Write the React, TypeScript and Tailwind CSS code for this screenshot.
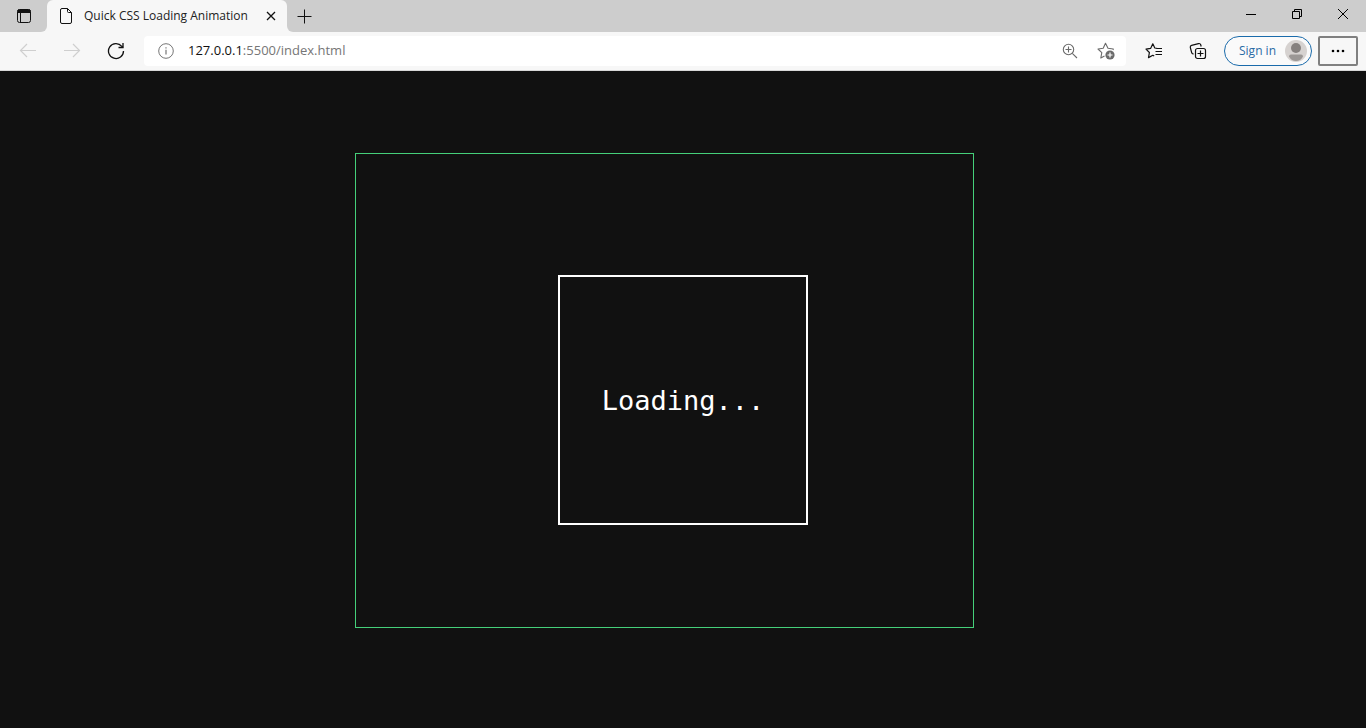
import { useState } from "react";

const pageUrl = { host: "127.0.0.1", rest: ":5500/index.html" };

function TitleBar() {
    return (
        <header className="flex h-8 items-stretch bg-[#f7f7f7]">
            <button aria-label="Tab actions" className="flex w-[47px] items-center justify-center rounded-br-md bg-[#cdcdcd]">
                <svg width="16" height="16" viewBox="0 0 16 16" fill="none" stroke="#111">
                    <rect x="1.5" y="1.5" width="13" height="13" rx="2" />
                    <path d="M2 2h12v2.5H2z" fill="#111" />
                    <path d="M4.5 5v9" />
                </svg>
            </button>

            <div className="bg-[#cdcdcd]">
                <div className="flex h-full w-60 items-center rounded-t-md bg-[#f7f7f7] pr-2 pl-3">
                    <svg width="14" height="16" viewBox="0 0 14 16" fill="none" stroke="#111">
                        <path d="M3 .5h5.5l4 4V14a1.5 1.5 0 0 1-1.5 1.5H3A1.5 1.5 0 0 1 1.5 14V2A1.5 1.5 0 0 1 3 .5z" />
                        <path d="M8.5 .5v3a1 1 0 0 0 1 1h3" />
                    </svg>
                    <span className="ml-[11px] flex-1 text-xs whitespace-nowrap text-[#222]">Quick CSS Loading Animation</span>
                    <button aria-label="Close tab" className="flex h-4 w-4 items-center justify-center">
                        <svg width="10" height="10" viewBox="0 0 10 10" stroke="#111" strokeWidth="1.3">
                            <path d="M1 1l8 8M9 1L1 9" />
                        </svg>
                    </button>
                </div>
            </div>

            <div className="flex flex-1 rounded-bl-md bg-[#cdcdcd]">
                <button aria-label="New tab" className="flex w-[35px] items-center justify-center">
                    <svg width="15" height="15" viewBox="0 0 15 15" stroke="#111">
                        <path d="M7.5 .5v14M.5 7.5h14" />
                    </svg>
                </button>

                <div className="ml-auto flex pb-1">
                    <button aria-label="Minimize" className="flex w-[46px] items-center justify-center">
                        <svg width="10" height="10" viewBox="0 0 10 10" stroke="#000">
                            <path d="M0 5.5h10" />
                        </svg>
                    </button>
                    <button aria-label="Restore" className="flex w-[46px] items-center justify-center">
                        <svg width="10" height="10" viewBox="0 0 10 10" fill="none" stroke="#000">
                            <path d="M.5 2.5h7v7h-7zM2.5 2.5v-2h7v7h-2" />
                        </svg>
                    </button>
                    <button aria-label="Close" className="flex w-[46px] items-center justify-center">
                        <svg width="12" height="12" viewBox="0 0 12 12" stroke="#000">
                            <path d="M1 1l10 10M11 1L1 11" />
                        </svg>
                    </button>
                </div>
            </div>
        </header>
    );
}

function Toolbar() {
    const [url, setUrl] = useState(pageUrl.host + pageUrl.rest);
    const [editing, setEditing] = useState(false);

    return (
        <nav className="flex h-[39px] items-center border-b border-[#d8d8d8] bg-[#f7f7f7] pr-2 pl-[6px]">
            <button aria-label="Back" disabled className="flex w-11 justify-center">
                <svg width="18" height="16" viewBox="0 0 18 16" fill="none" stroke="#cfcfcf" strokeWidth="1.2">
                    <path d="M17 7.5H1.5M8 1L1.5 7.5L8 14" />
                </svg>
            </button>
            <button aria-label="Forward" disabled className="flex w-11 justify-center">
                <svg width="18" height="16" viewBox="0 0 18 16" fill="none" stroke="#cfcfcf" strokeWidth="1.2">
                    <path d="M1 7.5h15.5M10 1L16.5 7.5L10 14" />
                </svg>
            </button>
            <button aria-label="Refresh" className="flex w-11 justify-center">
                <svg width="18" height="18" viewBox="0 0 18 18" fill="none" stroke="#111" strokeWidth="1.3">
                    <path d="M16.5 9A7.5 7.5 0 1 1 14.8 4.3L16 5.5" />
                    <path d="M16 1v4.5h-4.5" />
                </svg>
            </button>

            <div className="mx-[6px] flex h-[30px] flex-1 items-center rounded bg-white pr-[11px] pl-[14px]">
                <svg width="16" height="16" viewBox="0 0 16 16" fill="none" stroke="#767676">
                    <circle cx="8" cy="8" r="7.3" />
                    <path d="M8 6.8v4.7M8 4.2v1.3" strokeWidth="1.2" />
                </svg>
                {editing ? (
                    <input
                        autoFocus
                        aria-label="Address"
                        value={url}
                        onChange={(e) => setUrl(e.target.value)}
                        onBlur={() => setEditing(false)}
                        className="ml-[14px] flex-1 text-[13px] outline-none"
                    />
                ) : (
                    <button
                        onClick={() => setEditing(true)}
                        className="ml-[14px] flex-1 cursor-text text-left text-[13px] text-[#767676]"
                    >
                        <span className="text-[#111]">{pageUrl.host}</span>
                        {pageUrl.rest}
                    </button>
                )}
                <button aria-label="Zoom" className="mr-[19px]">
                    <svg width="16" height="16" viewBox="0 0 16 16" fill="none" stroke="#6b6b6b" strokeWidth="1.1" className="block">
                        <circle cx="6.5" cy="6.5" r="5.2" />
                        <path d="M10.3 10.3l4.7 4.7M6.5 3.5v6M3.5 6.5h6" />
                    </svg>
                </button>
                <button aria-label="Add to favorites">
                    <svg width="18" height="18" viewBox="0 0 18 18" fill="none" className="block">
                        <path
                            d="M16 8L16.3 7l-5.3-.7L8.5 1.2L6.2 6.3L1 7l3.8 3.7L3.8 16l3.7-2"
                            stroke="#6b6b6b"
                            strokeWidth="1.1"
                            strokeLinejoin="round"
                        />
                        <circle cx="13" cy="13" r="4.6" fill="#6b6b6b" />
                        <path d="M13 10.5v5M10.5 13h5" stroke="#fff" strokeWidth="1.2" />
                    </svg>
                </button>
            </div>

            <button aria-label="Favorites" className="flex w-11 justify-center">
                <svg width="18" height="18" viewBox="0 0 18 18" fill="none" stroke="#111" strokeWidth="1.2" strokeLinejoin="round">
                    <path d="M12.5 6.5L9.8 6L7.8 1.8L5.6 6.4L1 7.1l3.4 3.4L3.5 15.6l4.3-2.3 1.4.8" />
                    <path d="M11.5 6.5H17M10.5 9.5H17M10.5 12.5H17" />
                </svg>
            </button>
            <button aria-label="Collections" className="flex w-11 justify-center">
                <svg width="18" height="18" viewBox="0 0 18 18" fill="none" stroke="#111" strokeWidth="1.2">
                    <path d="M4.5 12.2L3.4 11.5a2 2 0 0 1-.8-1.2L1.3 5.5A1.8 1.8 0 0 1 2.6 3.4L9.5 1.6a1.8 1.8 0 0 1 2.2 1.2l.5 1.7" />
                    <rect x="6.5" y="6.5" width="10" height="10" rx="2" />
                    <path d="M11.5 8.5v6M8.5 11.5h6" />
                </svg>
            </button>

            <button className="ml-1 flex h-[30px] w-[88px] items-center justify-between rounded-full border border-[#1a6bab] bg-[#fafafa] pr-1 pl-[14px] text-xs whitespace-nowrap text-[#2a6ba5]">
                Sign in
                <svg width="22" height="22" viewBox="0 0 22 22">
                    <circle cx="11" cy="11" r="11" fill="#d6d2d0" />
                    <circle cx="11" cy="8" r="5" fill="#85807e" />
                    <path d="M4 16.5a2 2 0 0 1 2-2h10a2 2 0 0 1 2 2c-1.5 3-4 4.5-7 4.5s-5.5-1.5-7-4.5z" fill="#9b9795" />
                </svg>
            </button>
            <button
                aria-label="Settings and more"
                className="ml-[6px] flex h-[30px] w-10 items-center justify-center rounded-xs border-2 border-[#808080]"
            >
                <svg width="14" height="4" viewBox="0 0 14 4" fill="#000">
                    <circle cx="2" cy="2" r="1.3" />
                    <circle cx="7" cy="2" r="1.3" />
                    <circle cx="12" cy="2" r="1.3" />
                </svg>
            </button>
        </nav>
    );
}

export default function App() {
    return (
        <div className="flex h-screen flex-col font-['Open_Sans',sans-serif]">
            <TitleBar />
            <Toolbar />

            <main className="flex flex-1 items-center justify-center overflow-hidden bg-[#111]">
                <div className="relative flex h-[250px] w-[250px] items-center justify-center border-2 border-white">
                    {/* outer ring, caught while it expands around the box */}
                    <div className="absolute -top-[124px] -left-[205px] h-[475px] w-[619px] border border-[#45d07a]" />
                    <p className="pt-1 font-['DejaVu_Sans_Mono',monospace] text-[27px] text-white">Loading...</p>
                </div>
            </main>
        </div>
    );
}
